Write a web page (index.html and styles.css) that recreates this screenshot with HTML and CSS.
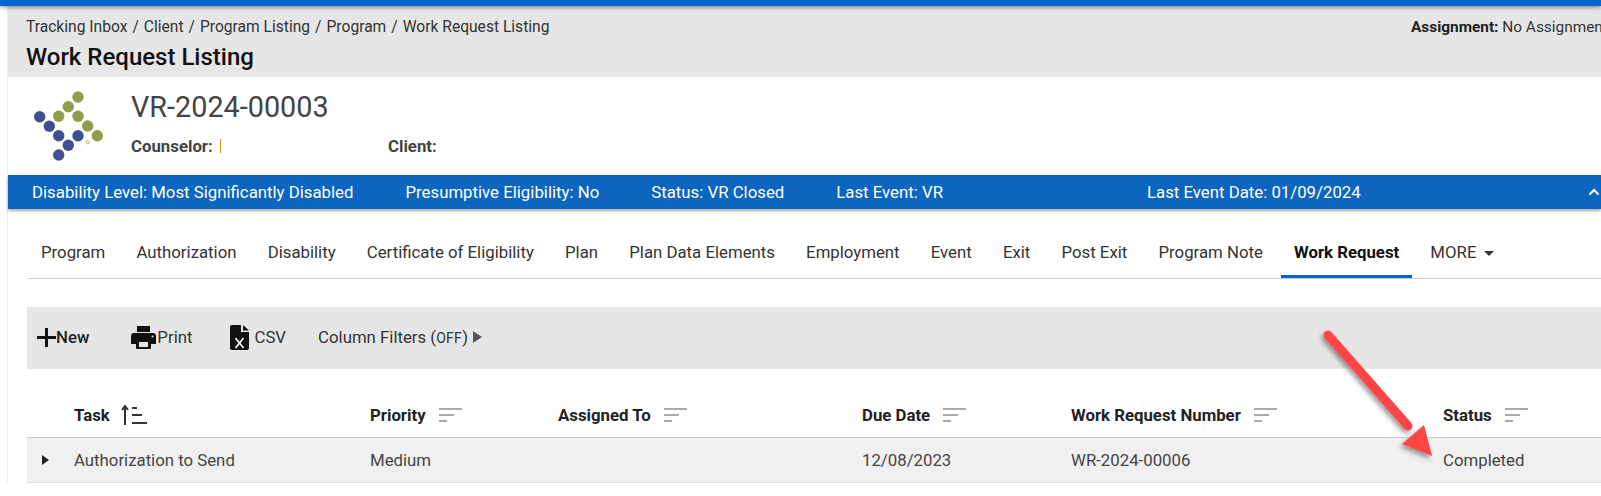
FILE: index.html
```html
<!DOCTYPE html>
<html lang="en">
<head>
  <meta charset="UTF-8" />
  <title>Work Request Listing</title>
  <link rel="stylesheet" href="styles.css">
</head>
<body>
  <div class="topbar"></div>

  <div class="page">
    <header class="page-head">
      <div class="crumb-row">
        <nav class="crumbs">
          <span>Tracking Inbox</span><i>/</i><span>Client</span><i>/</i><span>Program Listing</span><i>/</i><span>Program</span><i>/</i><span>Work Request Listing</span>
        </nav>
        <div class="assignment"><b>Assignment:</b> No Assignment</div>
      </div>
      <h1>Work Request Listing</h1>
    </header>

    <section class="case">
      <svg class="logo" width="72" height="76" viewBox="0 -2 72 76">
        <g fill="#3f4f91">
          <circle cx="7.7" cy="23.7" r="5.7"/>
          <circle cx="17.3" cy="33.3" r="5.7"/>
          <circle cx="26.7" cy="42.7" r="5.7"/>
          <circle cx="36.3" cy="52.3" r="5.7"/>
          <circle cx="26.7" cy="62" r="5.7"/>
          <circle cx="46" cy="42.7" r="5.7"/>
        </g>
        <g fill="#8f9e4d">
          <circle cx="46" cy="4" r="5.7"/>
          <circle cx="36.3" cy="13.7" r="5.7"/>
          <circle cx="26.7" cy="23.3" r="5.7"/>
          <circle cx="46" cy="23.3" r="5.7"/>
          <circle cx="55.7" cy="33" r="5.7"/>
          <circle cx="65.3" cy="42.7" r="5.7"/>
          <circle cx="55.7" cy="49.3" r="1.6" fill="none" stroke="#a9b47a" stroke-width="1"/>
        </g>
      </svg>
      <div class="case-info">
        <div class="case-no">VR-2024-00003</div>
        <div class="case-people">
          <div class="person"><b>Counselor:</b><span class="tick"></span></div>
          <div class="person"><b>Client:</b></div>
        </div>
      </div>
    </section>

    <div class="status-bar">
      <span>Disability Level: Most Significantly Disabled</span>
      <span>Presumptive Eligibility: No</span>
      <span>Status: VR Closed</span>
      <span>Last Event: VR</span>
      <span class="last-date">Last Event Date: 01/09/2024</span>
      <svg class="chevron" width="12" height="8" viewBox="0 0 12 8"><path d="M1.5 6.5 6 2l4.5 4.5" fill="none" stroke="#fff" stroke-width="2"/></svg>
    </div>

    <nav class="tabs">
      <a>Program</a>
      <a>Authorization</a>
      <a>Disability</a>
      <a>Certificate of Eligibility</a>
      <a>Plan</a>
      <a>Plan Data Elements</a>
      <a>Employment</a>
      <a>Event</a>
      <a>Exit</a>
      <a>Post Exit</a>
      <a>Program Note</a>
      <a class="active">Work Request</a>
      <a>MORE <span class="caret"></span></a>
    </nav>

    <div class="content">
      <div class="toolbar">
        <button class="tool tool-new">
          <svg width="19" height="19" viewBox="0 0 19 19"><path d="M8 0h3v8h8v3h-8v8H8v-8H0V8h8z" fill="#111"/></svg>
          <span>New</span>
        </button>
        <button class="tool tool-print">
          <svg width="25" height="23" viewBox="0 0 25 23"><path d="M6 0h13v6H6zM3 7h19a3 3 0 0 1 3 3v8h-5v-3H5v3H0v-8a3 3 0 0 1 3-3zM5 14h15v8a1 1 0 0 1-1 1H6a1 1 0 0 1-1-1z" fill="#111"/><path d="M8 16h9v5H8z" fill="#e6e6e6"/><circle cx="21.5" cy="10.5" r="1" fill="#e6e6e6"/></svg>
          <span>Print</span>
        </button>
        <button class="tool tool-csv">
          <svg width="19" height="25" viewBox="0 0 19 25"><path d="M2 0h9v7h8v16a2 2 0 0 1-2 2H2a2 2 0 0 1-2-2V2a2 2 0 0 1 2-2zM13 0l6 5.5h-6z" fill="#111"/><path d="M5.5 13l8 10M13.5 13l-8 10" stroke="#fff" stroke-width="1.7"/></svg>
          <span>CSV</span>
        </button>
        <button class="tool tool-filter">
          <span>Column Filters (<small>OFF</small>)</span>
          <span class="tri"></span>
        </button>
      </div>

      <div class="grid grid-head">
        <div></div>
        <div class="th th-task">Task
          <svg width="26" height="20" viewBox="0 0 26 20"><path d="M4 20V2M1 5l3-4 3 4" fill="none" stroke="#333" stroke-width="2"/><path d="M11 2h5v2h-5zM11 9h10v2H11zM11 17h15v2H11z" fill="#333"/></svg>
        </div>
        <div class="th">Priority <svg class="sort" width="23" height="15" viewBox="0 0 23 15"><path d="M0 0h23v2H0zM0 6h15v2H0zM0 12h8v2H0z"/></svg></div>
        <div class="th">Assigned To <svg class="sort" width="23" height="15" viewBox="0 0 23 15"><path d="M0 0h23v2H0zM0 6h15v2H0zM0 12h8v2H0z"/></svg></div>
        <div class="th">Due Date <svg class="sort" width="23" height="15" viewBox="0 0 23 15"><path d="M0 0h23v2H0zM0 6h15v2H0zM0 12h8v2H0z"/></svg></div>
        <div class="th">Work Request Number <svg class="sort" width="23" height="15" viewBox="0 0 23 15"><path d="M0 0h23v2H0zM0 6h15v2H0zM0 12h8v2H0z"/></svg></div>
        <div class="th">Status <svg class="sort" width="23" height="15" viewBox="0 0 23 15"><path d="M0 0h23v2H0zM0 6h15v2H0zM0 12h8v2H0z"/></svg></div>
      </div>
      <div class="grid grid-row">
        <div class="expander"><span class="row-tri"></span></div>
        <div>Authorization to Send</div>
        <div>Medium</div>
        <div></div>
        <div>12/08/2023</div>
        <div>WR-2024-00006</div>
        <div>Completed</div>
      </div>
    </div>
  </div>

  <svg class="arrow" width="130" height="145" viewBox="0 0 130 145">
    <defs>
      <filter id="arrow-shadow" x="-20%" y="-20%" width="140%" height="140%">
        <feDropShadow dx="-2" dy="3" stdDeviation="2.5" flood-color="#000" flood-opacity="0.4"/>
      </filter>
    </defs>
    <path d="M14 17 L94 108" stroke="#ff4444" stroke-width="9" stroke-linecap="round" fill="none" filter="url(#arrow-shadow)"/>
    <path d="M110 107 L118 138 L88 126 Z" fill="#ff4444" filter="url(#arrow-shadow)"/>
  </svg>
</body>
</html>
```

FILE: styles.css
```css
* {
  box-sizing: border-box;
}

html, body {
  margin: 0;
  height: 496px;
  overflow: hidden;
}

body {
  background: #fff;
  color: #333;
  font-family: Roboto, sans-serif;
  font-size: 16.8px;
  position: relative;
}

.topbar {
  height: 6px;
  background: #0066cc;
  box-shadow: 0 1px 5px rgba(0, 0, 0, 0.5);
  position: relative;
  z-index: 2;
}

.page {
  margin-left: 7px;
  width: 1594px;
  border-left: 1px solid #eee;
}

/* header */
.page-head {
  background: #e6e6e6;
  height: 71px;
  padding: 11px 0 0 18px;
}

.crumb-row {
  display: flex;
  white-space: nowrap;
}

.crumbs {
  flex: 0 0 1385px;
  font-size: 15.6px;
  color: #333;
  line-height: 20px;
}

.crumbs i {
  font-style: normal;
  margin: 0 5px;
}

.assignment {
  font-size: 15.4px;
  line-height: 20px;
  color: #333;
}

.assignment b {
  font-weight: 700;
  color: #222;
}

.page-head h1 {
  margin: 5px 0 0;
  font-size: 24px;
  line-height: 30px;
  font-weight: 500;
  color: #111;
}

/* case summary */
.case {
  height: 98px;
  display: flex;
  padding: 14px 0 0 24px;
}

.logo {
  flex: none;
}

.case-info {
  margin-left: 27px;
  margin-top: -1px;
}

.case-no {
  font-size: 28.8px;
  line-height: 34px;
  color: #444;
}

.case-people {
  display: flex;
  margin-top: 12px;
}

.person {
  width: 257px;
  display: flex;
  align-items: center;
  color: #444;
  line-height: 20px;
}

.person b {
  font-weight: 700;
}

.tick {
  width: 1px;
  height: 14px;
  background: #cf8f1f;
  margin-left: 7px;
}

/* blue bar */
.status-bar {
  height: 34px;
  background: #0c65be;
  color: #fff;
  display: flex;
  align-items: center;
  gap: 52px;
  padding-left: 24px;
  white-space: nowrap;
  box-shadow: 0 2px 3px rgba(0, 0, 0, 0.35);
  position: relative;
}

.last-date {
  margin-left: 152px;
}

.chevron {
  margin-left: auto;
  margin-right: 1px;
}

/* tabs */
.tabs {
  margin: 0 0 0 20px;
  height: 70px;
  padding-top: 26px;
  display: flex;
  border-bottom: 1px solid #ccc;
}

.tabs a {
  height: 43px;
  padding: 6px 13px 0;
  margin-right: 5.15px;
  line-height: 22px;
  color: #333;
  white-space: nowrap;
}

.tabs a.active {
  font-weight: 700;
  color: #111;
  border-bottom: 3px solid #0066cc;
}

.caret {
  display: inline-block;
  border: 5px solid transparent;
  border-top-color: #333;
  border-bottom: 0;
  vertical-align: middle;
  margin-left: 3px;
}

/* listing */
.content {
  margin: 28px 0 0 19px;
}

.toolbar {
  height: 62px;
  background: #e6e6e6;
  display: flex;
  align-items: flex-start;
  padding-top: 18px;
}

.tool {
  display: flex;
  align-items: center;
  background: none;
  border: 0;
  padding: 0;
  font: inherit;
  color: #333;
  height: 24px;
}

.tool-new {
  margin-left: 10px;
  font-weight: 500;
  color: #222;
}

.tool-print {
  margin-left: 42px;
  gap: 1px;
}

.tool-csv {
  margin-left: 38px;
  gap: 5px;
}

.tool-filter {
  margin-left: 32px;
  gap: 5px;
}

.tool small {
  font-size: 14px;
  letter-spacing: 0.3px;
}

.tri {
  width: 0;
  height: 0;
  border: 6.5px solid transparent;
  border-left: 9px solid #555;
  border-right: 0;
}

.grid {
  display: grid;
  grid-template-columns: 47px 296px 188px 304px 209px 372px 1fr;
  align-items: center;
}

.grid-head {
  height: 69px;
  padding-top: 24px;
  border-bottom: 1px solid #ccc;
}

.th {
  display: flex;
  align-items: center;
  gap: 13px;
  font-weight: 700;
  color: #222;
  white-space: nowrap;
}

.th-task {
  gap: 11px;
}

.sort {
  fill: #aaa;
}

.grid-row {
  height: 45px;
  background: #f0f0f0;
  border-bottom: 1px solid #ddd;
  color: #444;
}

.expander {
  padding-left: 15px;
  display: flex;
}

.row-tri {
  width: 0;
  height: 0;
  border: 5px solid transparent;
  border-left: 7px solid #222;
  border-right: 0;
}

.arrow {
  position: absolute;
  left: 1314px;
  top: 318px;
}
```
